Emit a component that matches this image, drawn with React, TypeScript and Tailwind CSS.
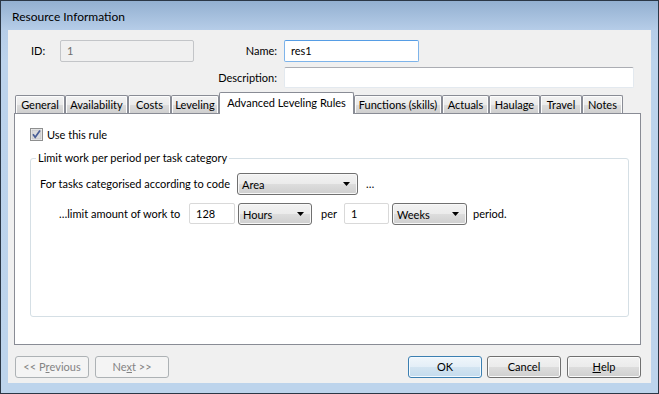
import React from "react";

const btnGrad =
  "bg-[linear-gradient(to_bottom,#f2f2f2_0%,#ebebeb_50%,#dddddd_50%,#cfcfcf_100%)]";

function Arrow() {
  return (
    <svg width="7" height="4" viewBox="0 0 7 4" className="shrink-0">
      <path d="M0 0 H7 L3.5 4 Z" fill="#000" />
    </svg>
  );
}

function Select({ value, w }: { value: string; w: string }) {
  return (
    <div
      className={`${w} h-[22px] shrink-0 flex items-center justify-between border border-[#707070] rounded-[3px] ${btnGrad} shadow-[inset_0_0_0_1px_#f8f8f8] pl-[4px] pr-[7px]`}
    >
      <span className="leading-none pt-[1px]">{value}</span>
      <Arrow />
    </div>
  );
}

function Input({
  value,
  w,
  h = "h-[21px]",
  extra = "",
}: {
  value?: string;
  w: string;
  h?: string;
  extra?: string;
}) {
  return (
    <div
      className={`${w} ${h} shrink-0 flex items-center pl-[6px] border rounded-[2px] ${extra}`}
    >
      {value}
    </div>
  );
}

function Tab({
  label,
  w,
  selected,
}: {
  label: string;
  w: string;
  selected?: boolean;
}) {
  if (selected) {
    return (
      <div
        className={`${w} h-[22px] shrink-0 relative z-10 -mb-px bg-white border border-b-0 border-[#898c95] rounded-t-[2px] flex justify-center pt-[2px]`}
      >
        {label}
      </div>
    );
  }
  return (
    <div
      className={`${w} h-[18px] shrink-0 border border-b-0 border-[#898c95] rounded-t-[2px] bg-[linear-gradient(to_bottom,#f2f2f2,#ebebeb_50%,#dddddd_50%,#cfcfcf)] shadow-[inset_0_1px_0_0_#fcfcfc,inset_1px_0_0_0_#fcfcfc,inset_-1px_0_0_0_#fcfcfc] flex justify-center pt-[1px]`}
    >
      {label}
    </div>
  );
}

function Button({
  children,
  variant = "normal",
}: {
  children: React.ReactNode;
  variant?: "normal" | "default" | "disabled";
}) {
  const cls =
    variant === "disabled"
      ? "border-[#adb2b5] bg-[#f4f4f4] text-[#838383]"
      : variant === "default"
      ? "border-[#3c7fb1] bg-[linear-gradient(to_bottom,#f0f6fb_0%,#e3eef7_50%,#d3e4f1_50%,#c4dbed_100%)] shadow-[inset_0_0_0_1px_#f4faff]"
      : `border-[#707070] ${btnGrad} shadow-[inset_0_0_0_1px_#fbfbfb]`;
  return (
    <div
      className={`w-[74px] h-[22px] shrink-0 flex items-center justify-center border rounded-[3px] ${cls}`}
    >
      {children}
    </div>
  );
}

function Checkbox() {
  return (
    <svg width="13" height="13" viewBox="0 0 13 13" className="shrink-0">
      <rect x="0.5" y="0.5" width="12" height="12" fill="#f4f4f4" stroke="#8e8f8f" />
      <rect x="2" y="2" width="9" height="9" fill="#dcdcdc" stroke="#b7b9bc" strokeWidth="0.6" />
      <path
        d="M3 6.2 L5.2 9.2 L10 2.6"
        fill="none"
        stroke="#4a5f97"
        strokeWidth="1.7"
      />
    </svg>
  );
}

export default function App() {
  return (
    <div className="w-[659px] h-[394px] font-['Lato',sans-serif] text-[11px] text-black leading-[16px] whitespace-nowrap border border-[#2b3746] bg-[linear-gradient(to_bottom,#93b0d1_0px,#b6cde8_29px,#bcd3ec_60px,#bdd4ec_100%)] flex flex-col overflow-hidden">
      {/* Title bar */}
      <div className="h-[29px] shrink-0 flex items-center pl-[11px] pt-[2px] text-[12px]">
        Resource Information
      </div>

      {/* Client area */}
      <div className="mx-[7px] h-[353px] bg-[#f0f0f0] flex flex-col pt-[10px]">
        {/* Row 1 */}
        <div className="flex items-center h-[22px]">
          <span className="w-[52px] pl-[23px] shrink-0">ID:</span>
          <Input
            value="1"
            w="w-[134px]"
            h="h-[22px]"
            extra="border-[#c3c5c8] bg-[#f0f0f0] text-[#6d6d6d]"
          />
          <span className="w-[83px] text-right shrink-0">Name:</span>
          <div className="w-[7px]" />
          <Input
            value="res1"
            w="w-[135px]"
            h="h-[22px]"
            extra="border-[#7eb4ea] border-t-[#569de5] bg-white"
          />
        </div>

        {/* Row 2 */}
        <div className="flex items-center h-[21px] mt-[5px]">
          <span className="w-[269px] text-right shrink-0">Description:</span>
          <div className="w-[7px]" />
          <Input
            w="w-[350px]"
            extra="border-[#e3e9ef] border-t-[#abadb3] bg-white"
          />
        </div>

        {/* Tabs */}
        <div className="ml-[7px] mt-[4px] h-[21px] flex items-end">
          <Tab label="General" w="w-[50px]" />
          <Tab label="Availability" w="w-[63px]" />
          <Tab label="Costs" w="w-[43px]" />
          <Tab label="Leveling" w="w-[48px]" />
          <Tab label="Advanced Leveling Rules" w="w-[135px]" selected />
          <Tab label="Functions (skills)" w="w-[88px]" />
          <Tab label="Actuals" w="w-[47px]" />
          <Tab label="Haulage" w="w-[51px]" />
          <Tab label="Travel" w="w-[42px]" />
          <Tab label="Notes" w="w-[41px]" />
        </div>

        {/* Tab panel */}
        <div className="ml-[6px] w-[627px] h-[232px] bg-white border border-[#898c95] pl-[15px] pt-[14px] flex flex-col">
          <div className="flex items-center h-[13px] gap-[4px]">
            <Checkbox />
            <span>Use this rule</span>
          </div>

          <fieldset className="mt-[9px] w-[599px] h-[167px] border border-[#d5dfe5] rounded-[3px]">
            <legend className="ml-[5px] px-[2px] leading-[16px]">
              Limit work per period per task category
            </legend>
            <div className="flex items-center h-[22px] mt-[7px] pl-[9px]">
              <span className="w-[197px] shrink-0">
                For tasks categorised according to code
              </span>
              <Select value="Area" w="w-[121px]" />
              <span className="ml-[8px]">…</span>
            </div>
            <div className="flex items-center h-[21px] mt-[8px] pl-[28px]">
              <span className="w-[130px] shrink-0">…limit amount of work to</span>
              <Input value="128" w="w-[46px]" extra="border-[#d9d9d9] bg-white" />
              <div className="w-[3px]" />
              <Select value="Hours" w="w-[74px]" />
              <span className="w-[32px] pl-[9px] shrink-0">per</span>
              <Input value="1" w="w-[45px]" extra="border-[#d9d9d9] bg-white" />
              <div className="w-[3px]" />
              <Select value="Weeks" w="w-[75px]" />
              <span className="pl-[6px]">period.</span>
            </div>
          </fieldset>
        </div>

        {/* Buttons */}
        <div className="flex items-center mt-[11px] pl-[7px] pr-[10px]">
          <Button variant="disabled">
            &lt;&lt; P<u>r</u>evious
          </Button>
          <div className="w-[6px]" />
          <Button variant="disabled">
            Ne<u>x</u>t &gt;&gt;
          </Button>
          <div className="flex-1" />
          <Button variant="default">OK</Button>
          <div className="w-[5px]" />
          <Button>Cancel</Button>
          <div className="w-[6px]" />
          <Button>
            <u>H</u>elp
          </Button>
        </div>
      </div>
    </div>
  );
}
